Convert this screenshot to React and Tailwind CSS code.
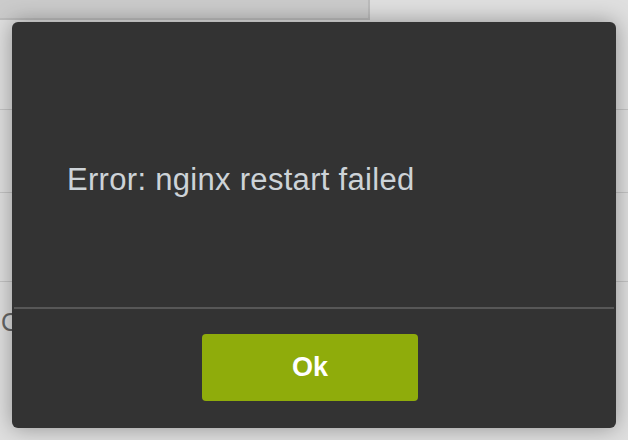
export default function App() {
  return (
    <div className="relative h-[440px] w-[628px] overflow-hidden bg-[#dfdfdf] font-['Liberation_Sans',Arial,sans-serif]">
      <div className="flex flex-col">
        <div className="h-[20px] w-[370px] border-b-2 border-r-2 border-[#bcbcbc] bg-[#cbcbcb]" />
        <div className="h-[90px] border-b border-[#c4c4c4]" />
        <div className="h-[83px] border-b border-[#c4c4c4]" />
        <div className="h-[89px] border-b border-[#c4c4c4]" />
        <div className="pl-[1px] pt-[25px] text-[25px] leading-[30px] text-[#666]">Cancel</div>
      </div>

      <div className="absolute left-[12px] top-[22px] flex h-[406px] w-[604px] flex-col rounded-[6px] bg-[#333333] shadow-[0_0_22px_rgba(0,0,0,0.35)]">
        <div className="h-[285px] pl-[55px] pt-[141px]">
          <p className="text-[31px] leading-[33px] tracking-[0.3px] text-[#cdd3d8]">Error: nginx restart failed</p>
        </div>
        <div className="mx-[2px] h-[2px] bg-[#575757]" />
        <div className="flex justify-center pr-[8px] pt-[25px]">
          <button className="h-[67px] w-[216px] rounded-[4px] bg-[#8fac0b] text-[27px] font-bold text-white">Ok</button>
        </div>
      </div>
    </div>
  );
}
